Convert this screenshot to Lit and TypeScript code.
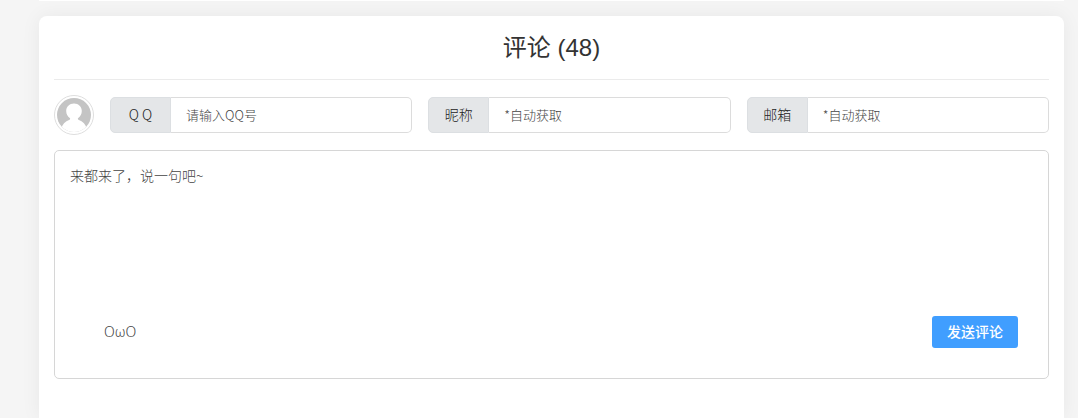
import { LitElement, html, css } from "lit";
import { customElement, property } from "lit/decorators.js";

@customElement("comment-field")
class CommentField extends LitElement {
  @property() label = "";
  @property() hint = "";
  @property() type = "text";

  static styles = css`
    :host {
      display: flex;
      flex: 1 1 0;
      min-width: 0;
      height: 36px;
    }
    .label {
      box-sizing: border-box;
      flex: none;
      min-width: 61px;
      padding: 0 15px;
      background: #e4e6e8;
      border: 1px solid #dcdfe2;
      border-radius: 5px 0 0 5px;
      color: #222;
      font-size: 14px;
      line-height: 32px;
      text-align: center;
      white-space: nowrap;
    }
    .input {
      box-sizing: border-box;
      flex: 1;
      min-width: 0;
      margin: 0;
      padding: 0 15px 2px;
      border: 1px solid #dcdcdc;
      border-left: 0;
      border-radius: 0 5px 5px 0;
      background: #fff;
      color: #333;
      font-family: inherit;
      font-weight: inherit;
      font-size: 13px;
      outline: none;
    }
    .input::placeholder {
      color: #444;
      opacity: 1;
    }
  `;

  render() {
    return html`
      <label class="label" for="field">${this.label}</label>
      <input class="input" id="field" type=${this.type} placeholder=${this.hint} />
    `;
  }
}

@customElement("app-root")
class AppRoot extends LitElement {
  static styles = css`
    :host {
      box-sizing: border-box;
      display: flex;
      flex-direction: column;
      gap: 15px;
      min-height: 100vh;
      padding: 0 14px 0 39px;
      overflow: hidden;
      background: #f5f5f5;
      font-family: "Noto Sans CJK SC", sans-serif;
      font-weight: 300;
    }
    .card {
      background: #fff;
      border-radius: 8px;
      box-shadow: 0 0 20px rgba(0, 0, 0, 0.06);
    }
    .previous {
      height: 1px;
      border-radius: 0;
    }
    .comments {
      flex: 1;
      padding: 0 15px 39px;
      border-radius: 8px 8px 0 0;
    }
    .title {
      margin: 0 0 15px;
      height: 63px;
      border-bottom: 1px solid #ebebeb;
      color: #333;
      font: 400 24px/64px "Liberation Sans", "Noto Sans CJK SC", sans-serif;
      text-align: center;
    }
    .fields {
      display: flex;
      align-items: center;
      gap: 16px;
    }
    .avatar {
      flex: none;
      width: 40px;
      height: 40px;
    }
    .composer {
      display: flex;
      flex-direction: column;
      margin-top: 15px;
      border: 1px solid #d6d6d6;
      border-radius: 5px;
    }
    .message {
      box-sizing: border-box;
      display: block;
      width: 100%;
      height: 165px;
      padding: 14px 15px;
      border: 0;
      background: none;
      color: #333;
      font-family: inherit;
      font-weight: inherit;
      font-size: 14px;
      line-height: 20px;
      resize: none;
      outline: none;
    }
    .message::placeholder {
      color: #444;
      opacity: 1;
    }
    .toolbar {
      display: flex;
      align-items: center;
      justify-content: space-between;
      padding: 0 30px 30px 49px;
    }
    .emote {
      padding: 0;
      border: 0;
      background: none;
      color: #444;
      font-family: "Noto Sans", sans-serif;
      font-weight: inherit;
      font-size: 14px;
      line-height: 20px;
      cursor: pointer;
    }
    .send {
      height: 32px;
      padding: 0 15px 2px;
      border: 0;
      border-radius: 3px;
      background: #409eff;
      color: #fff;
      font-family: inherit;
      font-size: 14px;
      font-weight: 500;
      cursor: pointer;
    }
  `;

  render() {
    return html`
      <div class="card previous"></div>
      <section class="card comments">
        <h2 class="title">评论 (48)</h2>
        <div class="fields">
          <svg class="avatar" viewBox="0 0 40 40" aria-hidden="true">
            <defs>
              <clipPath id="face"><circle cx="20" cy="20" r="17" /></clipPath>
            </defs>
            <circle cx="20" cy="20" r="19.5" fill="#fff" stroke="#dedede" />
            <g clip-path="url(#face)">
              <rect width="40" height="40" fill="#c4c4c4" />
              <path
                fill="#fff"
                d="M20 8.500c-4.500 0-7.800 3.300-7.800 7.600 0 3 1.400 5.500 3.600 6.900.5.400.4 1.500-.2 1.800C11 26.500 8.200 29.500 7.300 34v6h25.400v-6c-.9-4.500-3.700-7.500-8.300-9.200-.6-.3-.7-1.400-.2-1.800 2.200-1.400 3.600-3.900 3.600-6.900 0-4.300-3.300-7.600-7.800-7.600z"
              />
            </g>
          </svg>
          <comment-field label="Q Q" hint="请输入QQ号"></comment-field>
          <comment-field label="昵称" hint="*自动获取"></comment-field>
          <comment-field label="邮箱" hint="*自动获取" type="email"></comment-field>
        </div>
        <div class="composer">
          <textarea class="message" aria-label="评论" placeholder="来都来了，说一句吧~"></textarea>
          <div class="toolbar">
            <button class="emote" type="button">OωO</button>
            <button class="send" type="button">发送评论</button>
          </div>
        </div>
      </section>
    `;
  }
}
